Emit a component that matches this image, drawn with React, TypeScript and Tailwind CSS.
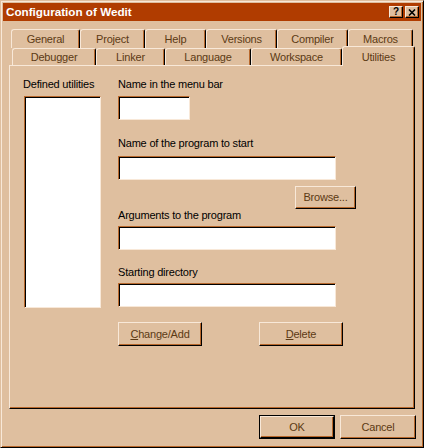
const raised =
  "border border-t-[#f8e8d8] border-l-[#f8e8d8] border-r-black border-b-black shadow-[inset_-1px_-1px_0_#b8682c]";
const sunken =
  "border border-t-[#b8682c] border-l-[#b8682c] border-r-[#f8e8d8] border-b-[#f8e8d8] shadow-[inset_1px_1px_0_#000] bg-white";
const tabEdge =
  "flex justify-center border-t border-l border-r border-t-[#f8e8d8] border-l-[#f8e8d8] border-r-black shadow-[inset_-1px_0_0_#b8682c] rounded-tl-[3px] rounded-tr-[2px] text-[#5c3a14]";

const backRow = [
  { label: "General", w: "w-[69px]" },
  { label: "Project", w: "w-[65px]" },
  { label: "Help", w: "w-[61px]" },
  { label: "Versions", w: "w-[71px]" },
  { label: "Compiler", w: "w-[71px]" },
  { label: "Macros", w: "w-[65px]" },
];

const frontRow = [
  { label: "Debugger", w: "w-[84px]" },
  { label: "Linker", w: "w-[69px]" },
  { label: "Language", w: "w-[86px]" },
  { label: "Workspace", w: "w-[91px]" },
];

const Label = ({ text, className = "" }: { text: string; className?: string }) => (
  <div className={`h-[13px] leading-[13px] text-black ${className}`}>{text}</div>
);

const Button = ({ children, className = "" }: { children: React.ReactNode; className?: string }) => (
  <div className={`${raised} flex items-center justify-center text-[#5c3a14] ${className}`}>{children}</div>
);

export default function App() {
  return (
    <div className="w-[424px] h-[448px] bg-[#dfbf9f] border border-t-[#dfbf9f] border-l-[#dfbf9f] border-r-black border-b-black shadow-[inset_1px_1px_0_#f8e8d8,inset_-1px_-1px_0_#b8682c] p-[2px] font-['Liberation_Sans',Arial,sans-serif] text-[11px] tracking-[-0.2px] select-none">
      {/* title bar */}
      <div className="h-[18px] bg-[#b03c00] flex items-center justify-between pl-[3px] pr-[2px]">
        <span className="text-white font-bold text-[11.7px] tracking-normal leading-none">Configuration of Wedit</span>
        <div className="flex gap-[2px]">
          <div className={`${raised} w-[14px] h-[12px] bg-[#dfbf9f] flex items-center justify-center text-black font-bold text-[10px] leading-none`}>
            ?
          </div>
          <div className={`${raised} w-[14px] h-[12px] bg-[#dfbf9f] flex items-center justify-center`}>
            <svg width="8" height="7" viewBox="0 0 8 7">
              <path d="M1 0.5 L7 6.5 M7 0.5 L1 6.5" stroke="#000" strokeWidth="1.6" />
            </svg>
          </div>
        </div>
      </div>

      {/* tabs */}
      <div className="mt-[8px] ml-[8px] flex h-[19px]">
        {backRow.map((t) => (
          <div key={t.label} className={`${tabEdge} ${t.w} h-[19px] items-center pt-[1px]`}>
            {t.label}
          </div>
        ))}
      </div>
      <div className="ml-[9px] flex h-[17px] items-end">
        {frontRow.map((t) => (
          <div key={t.label} className={`${tabEdge} ${t.w} h-[17px] items-center`}>
            {t.label}
          </div>
        ))}
        <div className={`${tabEdge} w-[73px] h-[20px] items-start pt-[2px] bg-[#dfbf9f] relative z-10 -mb-[1px]`}>
          Utilities
        </div>
      </div>

      {/* panel */}
      <div className="ml-[6px] w-[406px] h-[344px] border border-t-[#f8e8d8] border-l-[#f8e8d8] border-r-black border-b-black shadow-[inset_-1px_-1px_0_#b8682c] flex pt-[12px] pl-[14px]">
        <div className="w-[77px] flex flex-col">
          <Label text="Defined utilities" className="-ml-px" />
          <div className={`${sunken} mt-[5px] h-[212px]`} />
        </div>
        <div className="ml-[17px] w-[238px] flex flex-col">
          <Label text="Name in the menu bar" />
          <div className={`${sunken} mt-[5px] h-[24px] w-[72px]`} />
          <Label text="Name of the program to start" className="mt-[17px]" />
          <div className={`${sunken} mt-[6px] h-[24px] w-[218px]`} />
          <Button className="mt-[6px] h-[23px] w-[61px] self-end">Browse...</Button>
          <Label text="Arguments to the program" />
          <div className={`${sunken} mt-[4px] h-[24px] w-[218px]`} />
          <Label text="Starting directory" className="mt-[16px]" />
          <div className={`${sunken} mt-[4px] h-[24px] w-[218px]`} />
          <div className="mt-[15px] flex gap-[57px]">
            <Button className="h-[24px] w-[84px]">
              <span className="underline">C</span>hange/Add
            </Button>
            <Button className="h-[24px] w-[84px]">
              <span className="underline">D</span>elete
            </Button>
          </div>
        </div>
      </div>

      {/* dialog buttons */}
      <div className="mt-[6px] flex justify-end gap-[5px] pr-[5px]">
        <div className="w-[76px] h-[24px] border border-black flex">
          <Button className="flex-1">OK</Button>
        </div>
        <Button className="w-[76px] h-[24px]">Cancel</Button>
      </div>
    </div>
  );
}
